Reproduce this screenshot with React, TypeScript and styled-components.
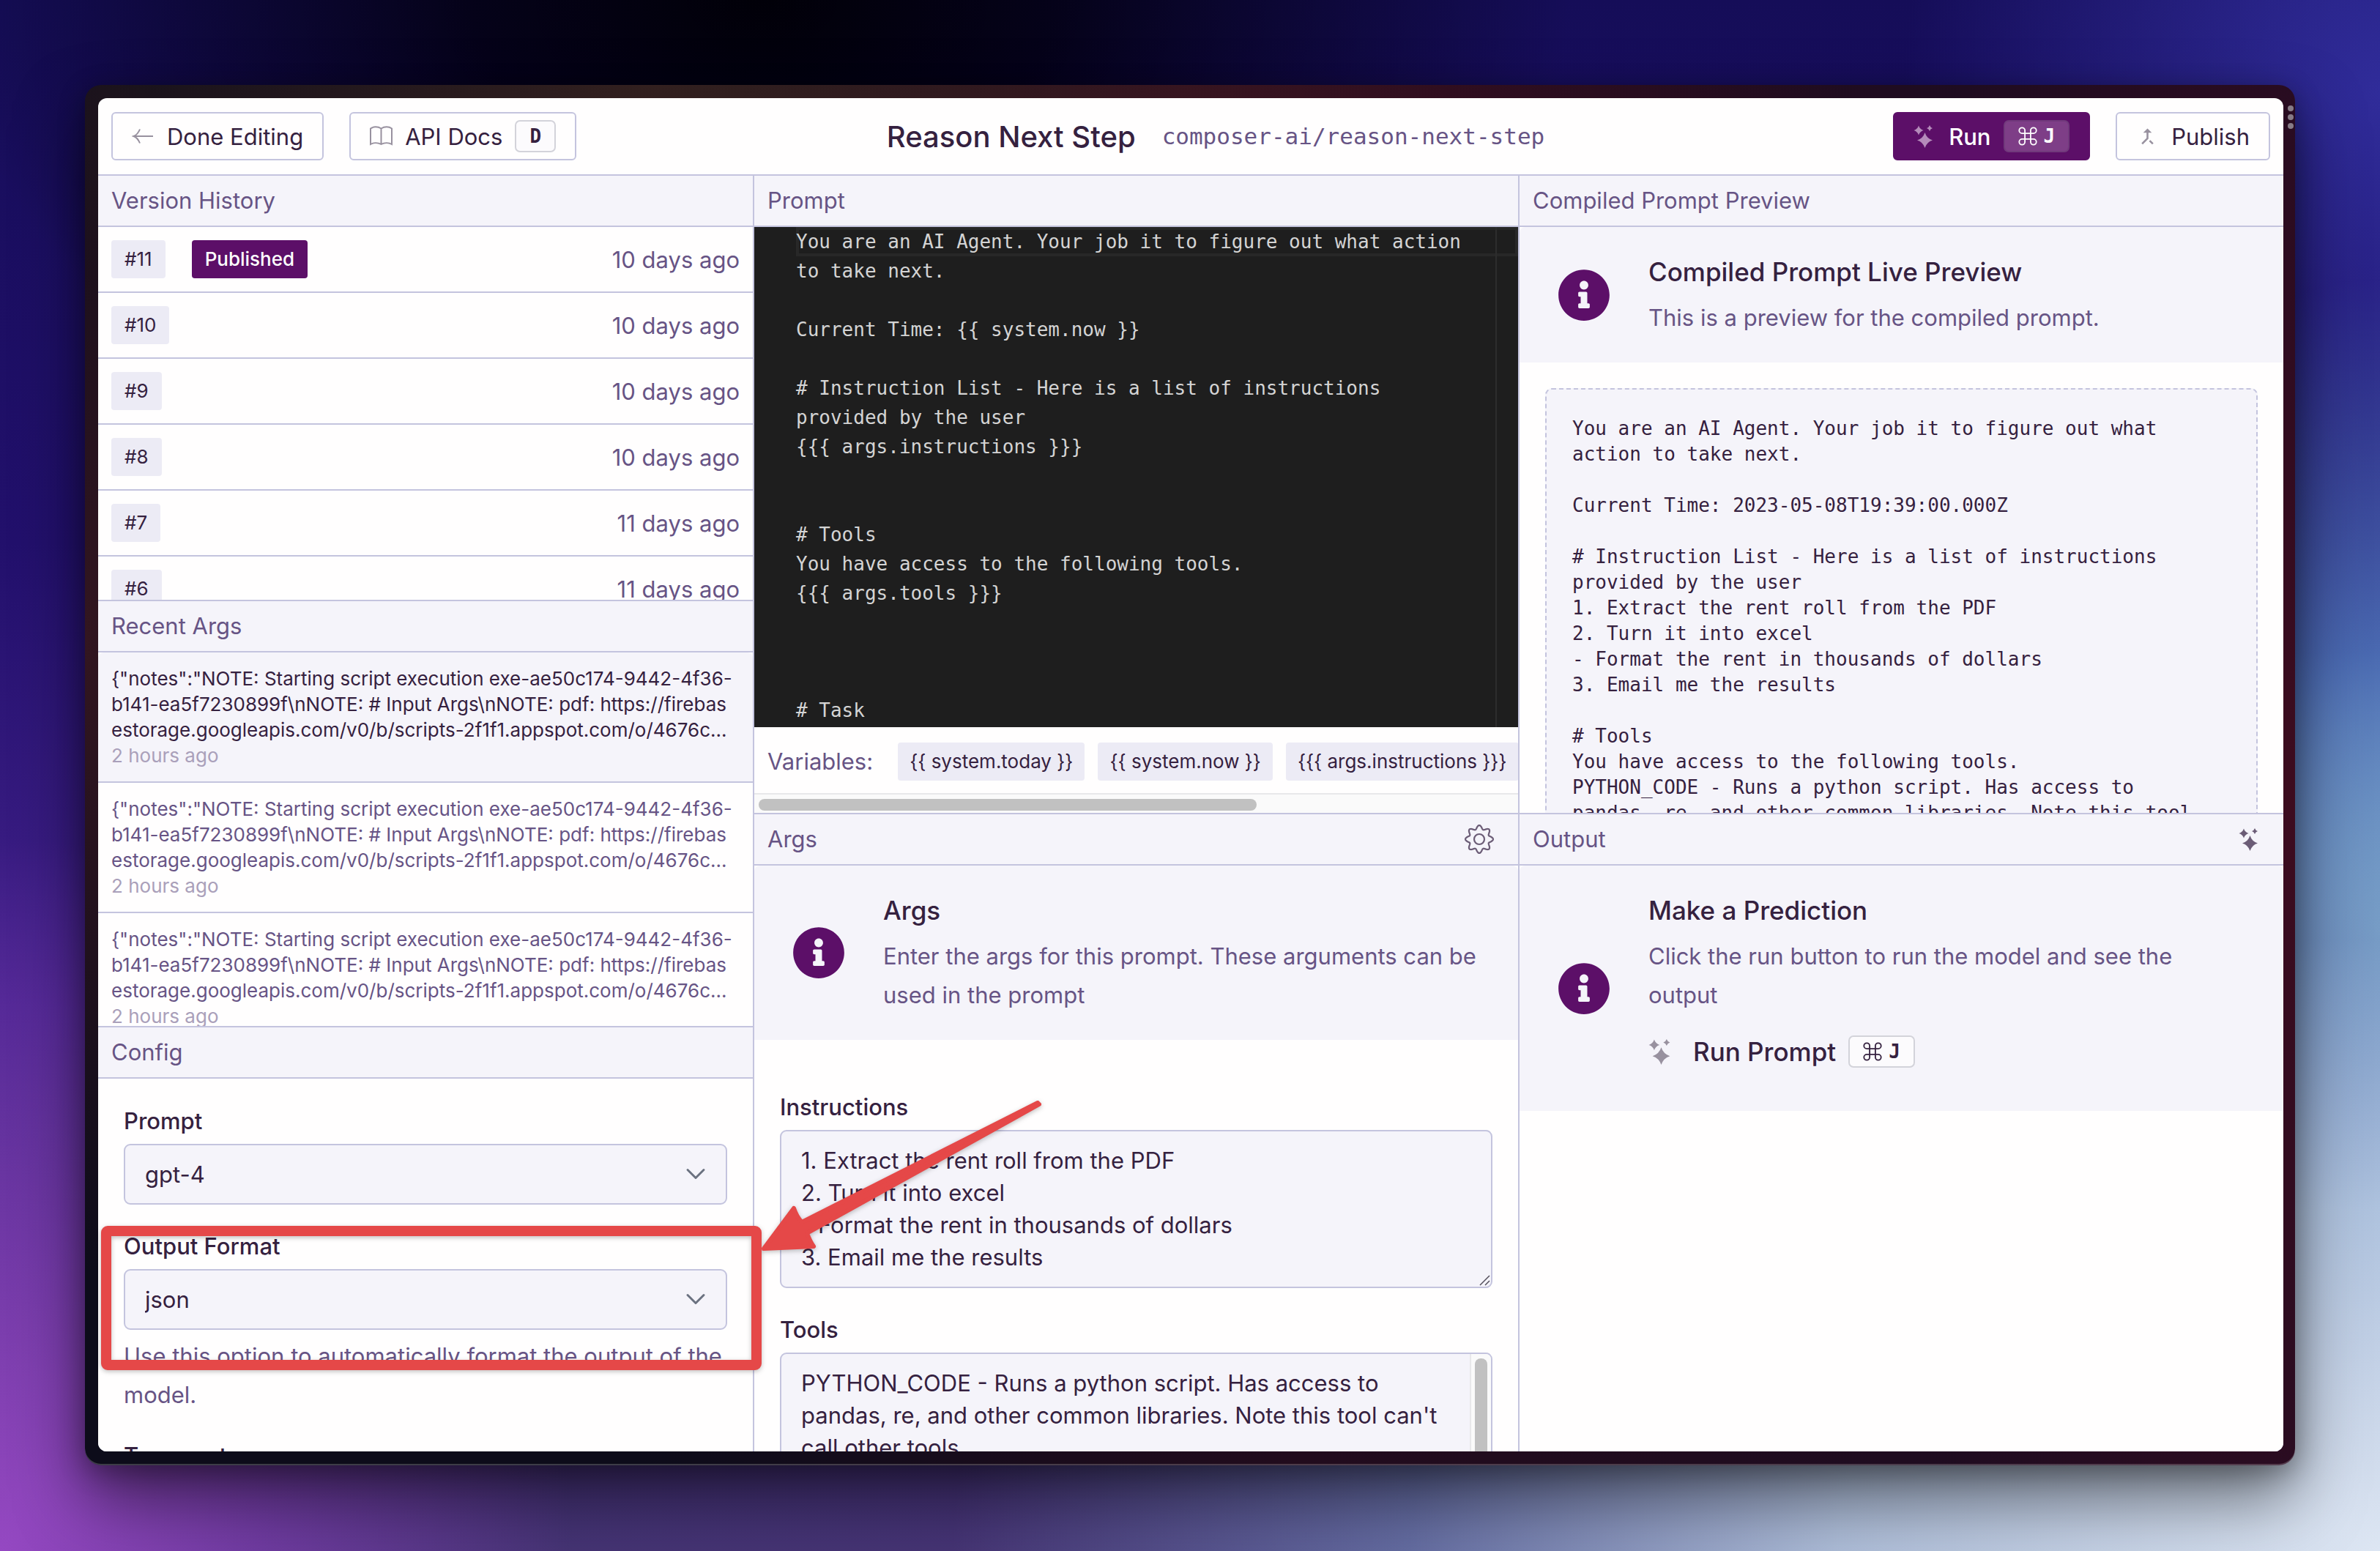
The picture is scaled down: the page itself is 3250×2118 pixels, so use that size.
import React from "react";
import styled, { createGlobalStyle, css } from "styled-components";
import { ChevronDown, Command } from "lucide-react";
import { FaInfoCircle } from "react-icons/fa";
import { MdCallMerge } from "react-icons/md";

const color = {
  page: "#fffefe",
  panel: "#f5f4fa",
  line: "#c4c4de",
  ink: "#35213f",
  muted: "#675485",
  faint: "#aaa0ba",
  chip: "#ecebf5",
  brand: "#5c0f68",
  icon: "#98919f",
  mark: "#e54848",
};

const sans = `Inter, "Liberation Sans", sans-serif`;
const mono = `"DejaVu Sans Mono", "Liberation Mono", monospace`;

const GlobalStyle = createGlobalStyle`
  * { box-sizing: border-box; }
  body { margin: 0; }
  h1, h2, h3, p, ul, pre { margin: 0; padding: 0; }
  ul { list-style: none; }
  button, select, textarea { font: inherit; color: inherit; margin: 0; }
`;

/* ---------- Desktop and window ---------- */

const Desktop = styled.div`
  position: relative;
  display: flex;
  height: 100vh;
  padding: 116px 116px 117px;
  overflow: hidden;
  font-family: ${sans};
  font-size: 31px;
  color: ${color.ink};
  background:
    radial-gradient(ellipse 24% 46% at 0% 100%, #9548c2 0%, rgba(130, 62, 180, 0.7) 45%, rgba(110, 50, 165, 0) 100%),
    radial-gradient(ellipse 34% 34% at 32% 0%, #010008 0%, rgba(2, 0, 14, 0.85) 36%, rgba(8, 3, 40, 0) 100%),
    radial-gradient(ellipse 60% 58% at 100% 100%, #dde6f3 0%, rgba(184, 203, 226, 0.9) 38%, rgba(120, 145, 190, 0.6) 68%, rgba(60, 70, 150, 0) 100%),
    radial-gradient(ellipse 16% 42% at 100% 60%, #74abd0 0%, rgba(85, 135, 198, 0.75) 42%, rgba(50, 60, 160, 0) 100%),
    radial-gradient(ellipse 20% 36% at 100% 6%, #302c9a 0%, rgba(40, 30, 140, 0) 100%),
    linear-gradient(180deg, #150d58 0%, #22106c 35%, #43218c 65%, #453474 100%);
`;

const Frame = styled.div`
  position: relative;
  display: flex;
  flex: 1;
  min-width: 0;
  padding: 18px 16px 19px 18px;
  border-radius: 22px;
  background:
    radial-gradient(ellipse 36% 20% at 26% 0%, #32201f 0%, rgba(50, 32, 31, 0) 100%),
    radial-gradient(ellipse 30% 16% at 50% 0%, #390f20 0%, rgba(57, 15, 32, 0) 100%),
    radial-gradient(ellipse 6% 46% at 0% 40%, #331620 0%, rgba(51, 22, 32, 0) 100%),
    radial-gradient(ellipse 20% 80% at 100% 52%, #3d0c1f 0%, rgba(61, 12, 31, 0) 100%),
    linear-gradient(90deg, #0d0c1a 0%, #0d0c1a 25%, #220c1d 55%, #1d0c22 100%);
  box-shadow:
    inset 0 -2px 0 rgba(255, 255, 255, 0.2),
    0 44px 90px rgba(0, 0, 0, 0.5),
    0 8px 36px rgba(0, 0, 0, 0.3);
`;

const FrameDots = styled.div`
  position: absolute;
  top: 28px;
  right: 2px;
  display: grid;
  gap: 4px;
`;

const Dot = styled.span`
  width: 8px;
  height: 8px;
  border-radius: 50%;
  background: #877b86;
`;

const Window = styled.div`
  display: flex;
  flex-direction: column;
  flex: 1;
  min-width: 0;
  overflow: hidden;
  border-radius: 12px;
  background: ${color.page};
`;

/* ---------- Top bar ---------- */

const TopBar = styled.header`
  display: grid;
  grid-template-columns: 1fr auto 1fr;
  align-items: center;
  flex: none;
  height: 106px;
  padding: 0 18px;
  border-bottom: 2px solid ${color.line};
`;

const Actions = styled.div<{ $end?: boolean }>`
  display: flex;
  gap: 35px;
  justify-content: ${(p) => (p.$end ? "flex-end" : "flex-start")};
`;

const TitleGroup = styled.div`
  display: flex;
  align-items: center;
  gap: 36px;
  padding-left: 68px;
`;

const Title = styled.h1`
  font-size: 40px;
  line-height: 53px;
  font-weight: 500;
`;

const Slug = styled.code`
  font-family: ${mono};
  font-size: 31px;
  color: ${color.muted};
`;

const buttonReset = css`
  display: flex;
  align-items: center;
  gap: 17px;
  cursor: pointer;
  white-space: nowrap;
`;

const Button = styled.button<{ $primary?: boolean }>`
  ${buttonReset}
  height: 66px;
  padding: 0 26px;
  border: 2px solid ${(p) => (p.$primary ? color.brand : color.line)};
  border-radius: 6px;
  background: ${(p) => (p.$primary ? color.brand : "transparent")};
  color: ${(p) => (p.$primary ? "#fff" : color.ink)};
  font-weight: ${(p) => (p.$primary ? 500 : 400)};
`;

const PlainButton = styled.button`
  ${buttonReset}
  height: 66px;
  padding: 0;
  border: 0;
  background: none;
  font-size: 35px;
  font-weight: 500;

  > svg {
    margin-right: 9px;
  }
`;

const IconButton = styled.button`
  display: flex;
  padding: 0;
  border: 0;
  background: none;
  color: #6b5c76;
  cursor: pointer;
`;

const Key = styled.kbd<{ $primary?: boolean }>`
  display: flex;
  align-items: center;
  gap: 9px;
  height: 44px;
  padding: 0 18px;
  border: 2px solid ${(p) => (p.$primary ? "#713a7c" : "#d3d3da")};
  border-radius: 7px;
  background: ${(p) => (p.$primary ? "#7e3e87" : "#fcfbfd")};
  font-family: ${mono};
  font-size: 26px;
  font-weight: 700;
`;

/* ---------- Columns and panels ---------- */

const Columns = styled.main`
  display: grid;
  grid-template-columns: minmax(0, 30fr) minmax(0, 35fr) minmax(0, 35fr);
  gap: 2px;
  flex: 1;
  min-height: 0;
  background: ${color.line};
`;

const Column = styled.div`
  display: grid;
  grid-auto-rows: minmax(0, 1fr);
  gap: 2px;
  min-height: 0;
`;

const Panel = styled.section`
  display: flex;
  flex-direction: column;
  min-height: 0;
  overflow: hidden;
  background: ${color.page};
`;

const PanelHead = styled.div<{ $pad?: number }>`
  display: flex;
  align-items: center;
  justify-content: space-between;
  flex: none;
  height: 70px;
  padding: 0 ${(p) => p.$pad ?? 18}px 0 18px;
  border-bottom: 2px solid ${color.line};
  background: ${color.panel};
  color: ${color.muted};
`;

const PanelTitle = styled.h2`
  font-size: 31px;
  line-height: 44px;
  font-weight: 400;
`;

const PanelBody = styled.div`
  flex: 1;
  min-height: 0;
  overflow: hidden;
`;

const Chip = styled.span<{ $brand?: boolean }>`
  flex: none;
  height: 52px;
  padding: 0 18px;
  border-radius: 4px;
  background: ${(p) => (p.$brand ? color.brand : color.chip)};
  color: ${(p) => (p.$brand ? "#fff" : color.ink)};
  font-size: 26px;
  line-height: 52px;
  font-weight: ${(p) => (p.$brand ? 500 : 400)};
  white-space: nowrap;
`;

const VersionRow = styled.li`
  display: flex;
  align-items: center;
  gap: 36px;
  height: 90px;
  padding: 0 18px;
  border-bottom: 2px solid ${color.line};
`;

const VersionTime = styled.time`
  margin-left: auto;
  color: ${color.muted};
`;

const ArgsEntry = styled.li<{ $active?: boolean }>`
  padding: 18px;
  border-bottom: 2px solid ${color.line};
  border-radius: ${(p) => (p.$active ? "8px 8px 0 0" : 0)};
  background: ${(p) => (p.$active ? color.panel : "transparent")};
  color: ${(p) => (p.$active ? color.ink : color.muted)};
  font-size: 26px;
  line-height: 35px;
  white-space: pre;
`;

const EntryTime = styled.p`
  color: ${color.faint};
`;

/* ---------- Forms ---------- */

const Form = styled.form<{ $top: number }>`
  display: grid;
  gap: 35px;
  padding: ${(p) => p.$top}px 35px 35px;
`;

const Field = styled.div`
  display: grid;
  gap: 9px;
`;

const Label = styled.label`
  line-height: 44px;
  font-weight: 500;
`;

const Control = styled.div`
  position: relative;
  display: grid;
`;

const Select = styled.select`
  appearance: none;
  width: 100%;
  height: 83px;
  padding: 0 27px;
  border: 2px solid ${color.line};
  border-radius: 9px;
  background: ${color.panel};
`;

const SelectArrow = styled(ChevronDown)`
  position: absolute;
  right: 21px;
  top: 19px;
  color: #6b7280;
  pointer-events: none;
`;

const Help = styled.p`
  line-height: 53px;
  color: ${color.muted};
`;

const TextArea = styled.textarea`
  display: block;
  width: 100%;
  padding: 18px 27px;
  border: 2px solid ${color.line};
  border-radius: 9px;
  background: ${color.panel};
  line-height: 44px;
  resize: none;
  overflow: hidden;
`;

const Grip = styled.svg`
  position: absolute;
  right: 2px;
  bottom: 2px;
`;

const VerticalTrack = styled.div`
  position: absolute;
  top: 2px;
  right: 2px;
  bottom: 2px;
  width: 29px;
  padding: 6px 5px;
  border-left: 2px solid #e8e8ea;
  border-radius: 0 7px 7px 0;
  background: #fafafa;
`;

const VerticalThumb = styled.div`
  height: 190px;
  border-radius: 8px;
  background: #c1c1c1;
`;

/* ---------- Prompt editor ---------- */

const Editor = styled.div`
  position: relative;
  display: flex;
  flex: 1;
  min-height: 0;
  background: #1e1e1e;
`;

const ActiveLine = styled.div`
  position: absolute;
  top: 0;
  left: 57px;
  right: 0;
  height: 40px;
  border: 4px solid #282828;
`;

const Ruler = styled.div`
  position: absolute;
  top: 0;
  bottom: 0;
  right: 29px;
  width: 2px;
  background: #2d2d2d;
`;

const Code = styled.textarea`
  position: relative;
  flex: 1;
  min-width: 0;
  padding: 0 0 0 57px;
  border: 0;
  background: transparent;
  color: #d4d4d4;
  font-family: ${mono};
  font-size: 26px;
  line-height: 40px;
  white-space: pre;
  resize: none;
  overflow: hidden;
`;

const Variables = styled.div`
  display: flex;
  align-items: center;
  gap: 18px;
  flex: none;
  padding: 21px 0 17px 18px;
  overflow: hidden;
  color: ${color.muted};

  ${Chip} {
    padding: 0 16px;
  }
`;

const VariablesLabel = styled.span`
  flex: none;
  padding-right: 16px;
  line-height: 52px;
`;

const HorizontalTrack = styled.div`
  flex: none;
  height: 27px;
  padding: 6px;
  border-top: 2px solid #e8e8ea;
  background: #fafafa;
`;

const HorizontalThumb = styled.div`
  width: 66%;
  height: 16px;
  border-radius: 8px;
  background: #c1c1c1;
`;

/* ---------- Notices and preview ---------- */

const NoticeBox = styled.div`
  display: flex;
  align-items: center;
  gap: 52px;
  padding: 35px 53px 35px 52px;
  border-radius: 8px 8px 0 0;
  background: ${color.panel};
`;

const NoticeIcon = styled(FaInfoCircle)`
  flex: none;
  color: ${color.brand};
`;

const NoticeText = styled.div`
  min-width: 0;
  line-height: 53px;
  color: ${color.muted};
`;

const NoticeTitle = styled.h3`
  margin-bottom: 9px;
  color: ${color.ink};
  font-size: 35px;
  font-weight: 500;
`;

const NoticeAction = styled.div`
  padding: 18px 0 13px;
  color: ${color.ink};
`;

const Preview = styled.pre`
  margin: 35px;
  padding: 36px 35px;
  border: 2px dashed ${color.line};
  border-radius: 9px;
  background: ${color.panel};
  font-family: ${mono};
  font-size: 26px;
  line-height: 35px;
`;

/* ---------- Markup over the window ---------- */

const Markup = styled.svg`
  position: absolute;
  left: 130px;
  top: 1480px;
  filter: drop-shadow(0 2px 3px rgba(0, 0, 0, 0.25));
  pointer-events: none;
`;

/* ---------- Icons ---------- */

const BackIcon = () => (
  <svg width="31" height="31" viewBox="0 0 31 31" fill="none" stroke={color.icon} strokeWidth="2" aria-hidden="true">
    <path d="M29 15H2.500M11 5.500C9 10.500 6.500 13.500 2.500 15C6.500 16.500 9 19.500 11 24.500" />
  </svg>
);

const BookIcon = () => (
  <svg width="31" height="31" viewBox="0 0 31 31" fill="none" stroke={color.icon} strokeWidth="2" aria-hidden="true">
    <path d="M1 4.500C5 1.600 11 1.600 15.500 4.500C20 1.600 26 1.600 30 4.500V26C26 23.500 20 23.500 15.500 26C11 23.500 5 23.500 1 26ZM15.500 4.500V26" />
  </svg>
);

const star = (x: number, y: number, r: number) => {
  const k = r * 0.24;
  return (
    `M${x} ${y - r}Q${x + k} ${y - k} ${x + r} ${y}Q${x + k} ${y + k} ${x} ${y + r}` +
    `Q${x - k} ${y + k} ${x - r} ${y}Q${x - k} ${y - k} ${x} ${y - r}Z`
  );
};

const SparkleIcon = ({ fill, size = 31 }: { fill: string; size?: number }) => (
  <svg width={size} height={size} viewBox="0 0 31 31" fill={fill} aria-hidden="true">
    <path d={star(15.5, 20.5, 10.5) + star(7, 7, 6.5) + star(22, 4, 4)} />
  </svg>
);

const gearPath = Array.from({ length: 96 }, (_, i) => {
  const a = (i / 96) * Math.PI * 2;
  const r = 16.4 + 2.6 * Math.cos(8 * a);
  return `${i ? "L" : "M"}${(20 + r * Math.cos(a)).toFixed(2)} ${(20 + r * Math.sin(a)).toFixed(2)}`;
}).join("");

const GearIcon = () => (
  <svg width="40" height="40" viewBox="0 0 40 40" fill="none" stroke="currentColor" strokeWidth="2.200" aria-hidden="true">
    <path d={gearPath + "Z"} strokeLinejoin="round" />
    <circle cx="20" cy="20" r="7" />
  </svg>
);

/* ---------- Data ---------- */

const versions = [
  { id: 11, age: "10 days ago", published: true },
  { id: 10, age: "10 days ago" },
  { id: 9, age: "10 days ago" },
  { id: 8, age: "10 days ago" },
  { id: 7, age: "11 days ago" },
  { id: 6, age: "11 days ago" },
];

const recentArgs = [
  '{"notes":"NOTE: Starting script execution exe-ae50c174-9442-4f36-',
  "b141-ea5f7230899f\\nNOTE: # Input Args\\nNOTE: pdf: https://firebas",
  "estorage.googleapis.com/v0/b/scripts-2f1f1.appspot.com/o/4676c...",
].join("\n");

const variables = ["{{ system.today }}", "{{ system.now }}", "{{{ args.instructions }}}"];

const promptSource = `You are an AI Agent. Your job it to figure out what action
to take next.

Current Time: {{ system.now }}

# Instruction List - Here is a list of instructions
provided by the user
{{{ args.instructions }}}


# Tools
You have access to the following tools.
{{{ args.tools }}}



# Task`;

const instructions = `1. Extract the rent roll from the PDF
2. Turn it into excel
- Format the rent in thousands of dollars
3. Email me the results`;

const tools = `PYTHON_CODE - Runs a python script. Has access to
pandas, re, and other common libraries. Note this tool can't
call other tools`;

const compiled = `You are an AI Agent. Your job it to figure out what
action to take next.

Current Time: 2023-05-08T19:39:00.000Z

# Instruction List - Here is a list of instructions
provided by the user
${instructions}

# Tools
You have access to the following tools.
PYTHON_CODE - Runs a python script. Has access to
pandas, re, and other common libraries. Note this tool`;

/* ---------- Page ---------- */

const RunKey = ({ primary }: { primary?: boolean }) => (
  <Key $primary={primary}>
    <Command size={26} viewBox="2 2 20 20" strokeWidth={1.4} aria-label="Command" />J
  </Key>
);

const Notice = ({ title, text, children }: { title: string; text: string; children?: React.ReactNode }) => (
  <NoticeBox>
    <NoticeIcon size={72} />
    <NoticeText>
      <NoticeTitle>{title}</NoticeTitle>
      <p>{text}</p>
      {children}
    </NoticeText>
  </NoticeBox>
);

export default function App() {
  return (
    <>
      <GlobalStyle />
      <Desktop>
        <Frame>
          <FrameDots>
            <Dot />
            <Dot />
            <Dot />
          </FrameDots>
          <Window>
            <TopBar>
              <Actions>
                <Button type="button">
                  <BackIcon />
                  Done Editing
                </Button>
                <Button type="button">
                  <BookIcon />
                  API Docs
                  <Key>D</Key>
                </Button>
              </Actions>
              <TitleGroup>
                <Title>Reason Next Step</Title>
                <Slug>composer-ai/reason-next-step</Slug>
              </TitleGroup>
              <Actions $end>
                <Button type="button" $primary>
                  <SparkleIcon fill="#b48bba" />
                  Run
                  <RunKey primary />
                </Button>
                <Button type="button">
                  <MdCallMerge size={31} color={color.icon} />
                  Publish
                </Button>
              </Actions>
            </TopBar>

            <Columns>
              <Column>
                <Panel>
                  <PanelHead>
                    <PanelTitle>Version History</PanelTitle>
                  </PanelHead>
                  <PanelBody as="ul">
                    {versions.map((v) => (
                      <VersionRow key={v.id}>
                        <Chip>#{v.id}</Chip>
                        {v.published && <Chip $brand>Published</Chip>}
                        <VersionTime>{v.age}</VersionTime>
                      </VersionRow>
                    ))}
                  </PanelBody>
                </Panel>
                <Panel>
                  <PanelHead>
                    <PanelTitle>Recent Args</PanelTitle>
                  </PanelHead>
                  <PanelBody as="ul">
                    {[0, 1, 2].map((i) => (
                      <ArgsEntry key={i} $active={i === 0}>
                        <p>{recentArgs}</p>
                        <EntryTime>2 hours ago</EntryTime>
                      </ArgsEntry>
                    ))}
                  </PanelBody>
                </Panel>
                <Panel>
                  <PanelHead>
                    <PanelTitle>Config</PanelTitle>
                  </PanelHead>
                  <PanelBody>
                    <Form $top={36}>
                      <Field>
                        <Label htmlFor="model">Prompt</Label>
                        <Control>
                          <Select id="model" defaultValue="gpt-4">
                            <option>gpt-4</option>
                          </Select>
                          <SelectArrow size={44} strokeWidth={1.6} />
                        </Control>
                      </Field>
                      <Field>
                        <Label htmlFor="format">Output Format</Label>
                        <Control>
                          <Select id="format" defaultValue="json">
                            <option>json</option>
                          </Select>
                          <SelectArrow size={44} strokeWidth={1.6} />
                        </Control>
                        <Help>Use this option to automatically format the output of the model.</Help>
                      </Field>
                      <Field>
                        <Label as="span">Temperature</Label>
                      </Field>
                    </Form>
                  </PanelBody>
                </Panel>
              </Column>

              <Column>
                <Panel>
                  <PanelHead>
                    <PanelTitle>Prompt</PanelTitle>
                  </PanelHead>
                  <Editor>
                    <ActiveLine />
                    <Ruler />
                    <Code aria-label="Prompt" defaultValue={promptSource} spellCheck={false} />
                  </Editor>
                  <Variables>
                    <VariablesLabel>Variables:</VariablesLabel>
                    {variables.map((v) => (
                      <Chip key={v}>{v}</Chip>
                    ))}
                  </Variables>
                  <HorizontalTrack>
                    <HorizontalThumb />
                  </HorizontalTrack>
                </Panel>
                <Panel>
                  <PanelHead $pad={33}>
                    <PanelTitle>Args</PanelTitle>
                    <IconButton type="button" aria-label="Args settings">
                      <GearIcon />
                    </IconButton>
                  </PanelHead>
                  <PanelBody>
                    <Notice
                      title="Args"
                      text="Enter the args for this prompt. These arguments can be used in the prompt"
                    />
                    <Form $top={70}>
                      <Field>
                        <Label htmlFor="instructions">Instructions</Label>
                        <Control>
                          <TextArea id="instructions" rows={4} defaultValue={instructions} spellCheck={false} />
                          <Grip width="17" height="17" viewBox="0 0 17 17" stroke="#55505c" strokeWidth="1.500">
                            <path d="M2 15L15 2M9 15L15 9" />
                          </Grip>
                        </Control>
                      </Field>
                      <Field>
                        <Label htmlFor="tools">Tools</Label>
                        <Control>
                          <TextArea id="tools" rows={4} defaultValue={tools} spellCheck={false} />
                          <VerticalTrack>
                            <VerticalThumb />
                          </VerticalTrack>
                        </Control>
                      </Field>
                    </Form>
                  </PanelBody>
                </Panel>
              </Column>

              <Column>
                <Panel>
                  <PanelHead>
                    <PanelTitle>Compiled Prompt Preview</PanelTitle>
                  </PanelHead>
                  <PanelBody>
                    <Notice title="Compiled Prompt Live Preview" text="This is a preview for the compiled prompt." />
                    <Preview>{compiled}</Preview>
                  </PanelBody>
                </Panel>
                <Panel>
                  <PanelHead $pad={30}>
                    <PanelTitle>Output</PanelTitle>
                    <IconButton type="button" aria-label="Run prompt">
                      <SparkleIcon fill="#6b5c76" />
                    </IconButton>
                  </PanelHead>
                  <PanelBody>
                    <Notice
                      title="Make a Prediction"
                      text="Click the run button to run the model and see the output"
                    >
                      <NoticeAction>
                        <PlainButton type="button">
                          <SparkleIcon fill={color.icon} size={35} />
                          Run Prompt
                          <RunKey />
                        </PlainButton>
                      </NoticeAction>
                    </Notice>
                  </PanelBody>
                </Panel>
              </Column>
            </Columns>
          </Window>
        </Frame>

        <Markup width="1300" height="400" viewBox="130 1480 1300 400" aria-hidden="true">
          <rect x="145" y="1681" width="888" height="183" rx="2" fill="none" stroke={color.mark} strokeWidth="14" />
          <path
            d="M1043 1705L1084 1650Q1088 1662 1095 1669L1417 1506L1419 1508L1102 1684Q1106 1695 1111 1702Z"
            fill={color.mark}
            stroke={color.mark}
            strokeWidth="6"
            strokeLinejoin="round"
          />
        </Markup>
      </Desktop>
    </>
  );
}
